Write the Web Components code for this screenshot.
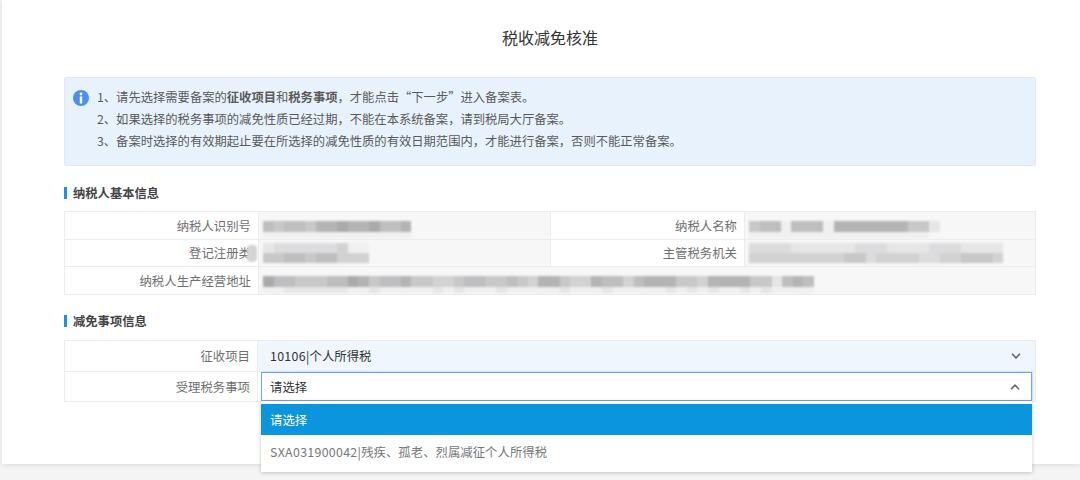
<!doctype html>
<html><head><meta charset="utf-8">
<style>
html,body{margin:0;height:480px;overflow:hidden;background:#f4f4f4;font-family:"Noto Sans CJK SC","Liberation Sans",sans-serif}
</style></head><body>
<tax-page>
  <tax-notice>
    <div>1、请先选择需要备案的<b>征收项目</b>和<b>税务事项</b>，才能点击“下一步”进入备案表。</div>
    <div>2、如果选择的税务事项的减免性质已经过期，不能在本系统备案，请到税局大厅备案。</div>
    <div>3、备案时选择的有效期起止要在所选择的减免性质的有效日期范围内，才能进行备案，否则不能正常备案。</div>
  </tax-notice>
  <sec-title style="margin-top:18px">纳税人基本信息</sec-title>
  <info-table style="margin-top:9px">
    <info-row h="28"><span slot="l1">纳税人识别号</span><blur-box slot="v1" t="65665778778667" b="11111111111111"></blur-box><span slot="l2">纳税人名称</span><blur-box slot="v2" t="566166617777777552" b="111111111111111110"></blur-box></info-row>
    <info-row h="27"><span slot="l1">登记注册类<smudge-dot></smudge-dot></span><blur-box slot="v1" t="2333333411" b="5566566444" wide></blur-box><span slot="l2">主管税务机关</span><blur-box slot="v2" t="333322222233322223332222" b="444444444553444433445554" wide></blur-box></info-row>
    <info-row h="27" full><span slot="l1">纳税人生产经营地址</span><blur-box slot="v1" t="8665556687566755445665565477544766467775547777552676" b="1122222211211111212111211111211121111121212112121111"></blur-box></info-row>
  </info-table>
  <sec-title style="margin-top:17px">减免事项信息</sec-title>
  <form-table style="margin-top:10px">
    <form-row label="征收项目"><tax-select value="10106|个人所得税" state="filled"></tax-select></form-row>
    <form-row label="受理税务事项"><tax-select value="请选择" state="open" option="SXA031900042|残疾、孤老、烈属减征个人所得税"></tax-select></form-row>
  </form-table>
</tax-page>
<script>
const def=(name,html,init)=>customElements.define(name,class extends HTMLElement{
  constructor(){super();this.attachShadow({mode:'open'}).innerHTML=typeof html==='function'?html(this):html}
  connectedCallback(){
    if(this._done)return;this._done=1;
    if(init)init(this);
  }
});
def('tax-page',`<style>
:host{display:block;margin-left:2px;height:464px;box-sizing:border-box;background:#fff;box-shadow:0 1px 5px rgba(0,0,0,.1);padding:25px 44px 0 62px}
h1{margin:0;text-align:center;font:400 16px/24px "Noto Sans CJK SC",sans-serif;color:#333}
.s{margin-top:28px;display:block}
</style><h1>税收减免核准</h1><div class="s"><slot></slot></div>`);
def('tax-notice',`<style>
:host{display:flex;box-sizing:border-box;height:89px;padding:8px 0 0 8px;gap:8px;background:#e8f2fd;border:1px solid #dbe9fa;border-radius:2px;font-size:12.3px;line-height:22px;color:#5a5a5a}
svg{flex:none;margin-top:4px}
.t{min-width:0}
::slotted(div){white-space:nowrap}
</style><svg width="16" height="16" viewBox="0 0 16 16"><circle cx="8" cy="8" r="8" fill="#4b8ff0"/><circle cx="8" cy="4" r="1.4" fill="#fff"/><rect x="6.8" y="6.4" width="2.4" height="7" rx=".4" fill="#fff"/></svg><div class="t"><slot></slot></div>`);
def('sec-title',`<style>
:host{display:flex;align-items:center;gap:6px;height:18px;font-size:12.3px;font-weight:700;color:#444}
i{width:3px;height:12px;background:#1890f4}
</style><i></i><slot></slot>`);
def('info-table',`<style>:host{display:block;border:1px solid #ececec;border-right-color:#eaeaea;box-sizing:border-box;height:84px}</style><slot></slot>`);
def('info-row',h=>`<style>
:host{display:grid;grid-template-columns:194px 292px 194px 1fr;height:${+h.getAttribute('h')}px;box-sizing:border-box;font-size:12.4px;color:#707070}
:host(:not(:last-child)){border-bottom:1px solid #ececec}
.l{display:flex;align-items:center;justify-content:flex-end;padding-right:7px;background:#fff;border-right:1px solid #ececec;white-space:nowrap;position:relative}
.v{background:#f7f7f7;display:flex;align-items:center;padding-left:4px;min-width:0}
.m{border-right:1px solid #ececec}
.full{grid-column:2 / 5}
</style>
<div class="l"><slot name="l1"></slot></div>
<div class="v ${h.hasAttribute('full')?'full':'m'}"><slot name="v1"></slot></div>
${h.hasAttribute('full')?'':`<div class="l"><slot name="l2"></slot></div><div class="v"><slot name="v2"></slot></div>`}`);
def('smudge-dot',`<style>:host{position:absolute;right:1px;top:5px;width:10px;height:17px;border-radius:4px;background:#d4d4d4;filter:blur(1.2px)}</style>`);
def('blur-box',`<style>
:host{display:grid;grid-auto-flow:row;filter:blur(.9px);flex:none}
:host(:not([wide])){margin-top:8px}
.r{display:flex}
.r i{display:block;width:10.6px}
</style><div id="w"></div>`,el=>{
  const w=el.shadowRoot.getElementById('w');
  const shade=d=>{const g=250-d*10;return d==0?'transparent':`rgb(${g},${g},${g+(d%3==0?2:0)})`};
  [['t',el.hasAttribute('wide')?10:11],['b',el.hasAttribute('wide')?10:6]].forEach(([k,h])=>{
    const r=document.createElement('div');r.className='r';
    for(const c of el.getAttribute(k)){const i=document.createElement('i');i.style.height=h+'px';i.style.background=shade(+c);r.append(i)}
    w.append(r);
  });
});
def('form-table',`<style>:host{display:block;border:1px solid #ececec;border-right-color:#eaeaea;box-sizing:border-box;height:62px}</style><slot></slot>`);
def('form-row',h=>`<style>
:host{display:grid;grid-template-columns:193px 1fr;height:29px;box-sizing:border-box;font-size:12.4px;color:#707070}
:host(:not(:last-child)){height:31px;border-bottom:1px solid #ececec}
.l{display:flex;align-items:center;justify-content:flex-end;padding-right:7px;border-right:1px solid #ececec}
</style><div class="l">${h.getAttribute('label')}</div><slot></slot>`);
const chev=(up)=>`<svg width="10" height="6" viewBox="0 0 10 6" fill="none" stroke="#666" stroke-width="1.6"><path d="${up?'M1 5.2 5 1.2 9 5.2':'M1 .8 5 4.8 9 .8'}"/></svg>`;
const fmt=s=>{const i=s.indexOf('|');return i<0?s:`<span style="letter-spacing:.3px">${s.slice(0,i+1)}</span>${s.slice(i+1)}`};
def('tax-select',h=>{
  const open=h.getAttribute('state')==='open';
  return `<style>
:host{display:block;position:relative;min-width:0;font-size:12.4px;color:#333}
.b{box-sizing:border-box;height:100%;display:flex;align-items:center;justify-content:space-between;white-space:nowrap;${open?'margin:0 3px;height:29px;border:1px solid #6ea3f5;padding:0 11px 0 8px;background:#fff;box-shadow:1px 0 2px rgba(110,163,245,.5);':'background:#f0f6fe;padding:0 14px 0 12px;'}}
.d{position:absolute;left:3px;right:3px;top:29px;height:71px;box-sizing:border-box;padding-top:3px;background:#fff;box-shadow:0 1px 4px rgba(0,0,0,.22);z-index:2}
.o{display:flex;align-items:center;padding-left:9px;white-space:pre}
.o.on{height:31px;background:#0a95dc;color:#fff}
.o.x{height:35px;color:#777;display:block;line-height:35px}
</style><div class="b"><span>${fmt(h.getAttribute('value'))}</span>${chev(open)}</div>
${open?`<div class="d"><div class="o on">请选择</div><div class="o x">${fmt(h.getAttribute('option'))}</div></div>`:''}`;
});
</script>
</body></html>
